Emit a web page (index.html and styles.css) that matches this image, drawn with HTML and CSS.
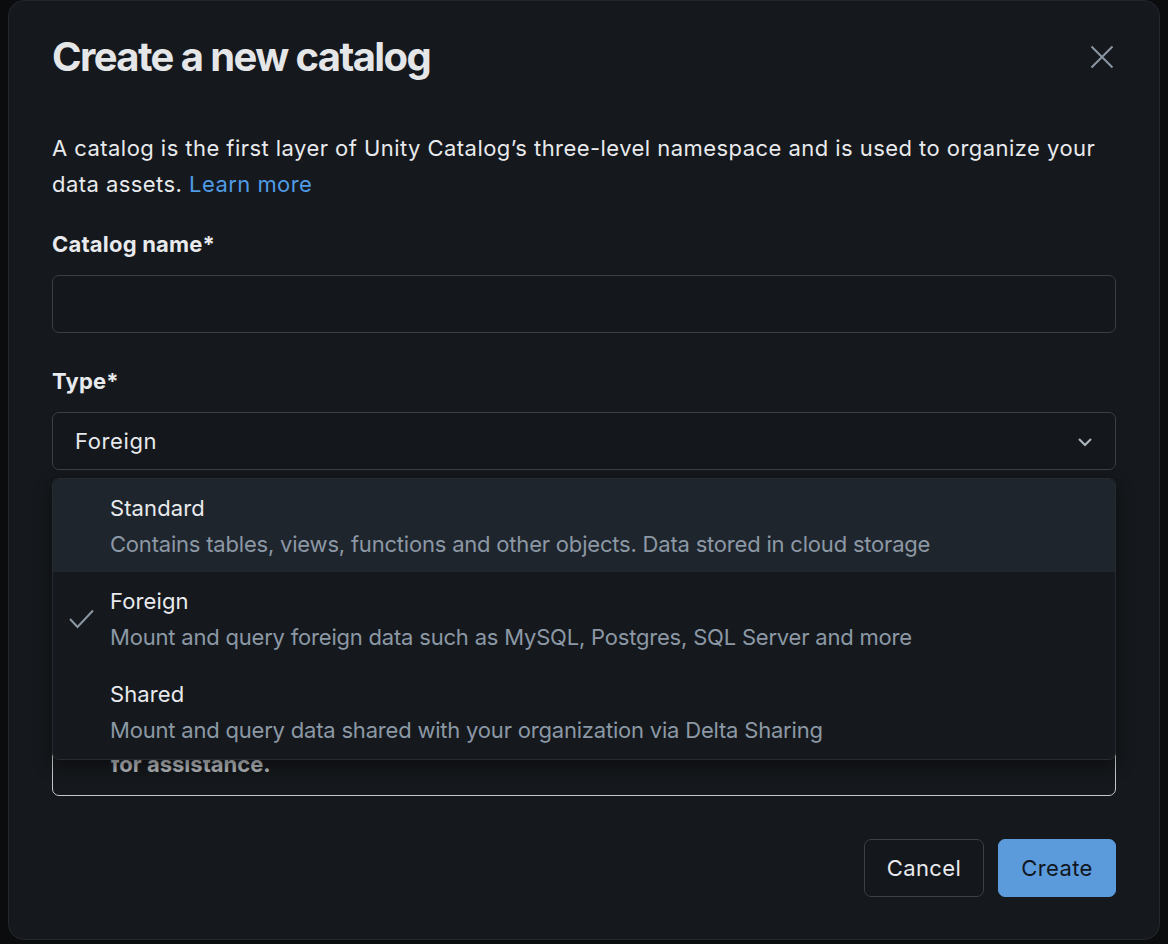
FILE: index.html
```html
<!DOCTYPE html>
<html lang="en">
<head>
<meta charset="utf-8">
<title>Create a new catalog</title>
<link rel="stylesheet" href="styles.css">
</head>
<body>
<div class="modal">
  <div class="modal-header">
    <h1 class="title">Create a new catalog</h1>
    <button class="close" aria-label="Close">
      <svg width="24" height="24" viewBox="0 0 24 24"><path d="M1.5 1.5 L22.5 22.5 M22.5 1.5 L1.5 22.5" stroke="#8b97a3" stroke-width="2" fill="none"/></svg>
    </button>
  </div>
  <p class="intro">A catalog is the first layer of Unity Catalog’s three-level namespace and is used to organize your data assets. <a class="link" href="#">Learn more</a></p>

  <div class="field">
    <label class="label">Catalog name*</label>
    <div class="input"></div>
  </div>

  <div class="field select-field">
    <label class="label">Type*</label>
    <div class="input select">
      <span>Foreign</span>
      <svg class="chevron" width="16" height="10" viewBox="0 0 16 10"><path d="M2 2 L8 8 L14 2" stroke="#a9b4be" stroke-width="2.2" fill="none"/></svg>
    </div>
    <div class="dropdown">
      <div class="option active">
        <span class="check"></span>
        <div class="opt-text">
          <div class="opt-title">Standard</div>
          <div class="opt-desc">Contains tables, views, functions and other objects. Data stored in cloud storage</div>
        </div>
      </div>
      <div class="option">
        <span class="check"><svg width="25" height="20" viewBox="0 0 25 20"><path d="M1 10 L8.5 18 L24 1.5" stroke="#8b97a3" stroke-width="2" fill="none"/></svg></span>
        <div class="opt-text">
          <div class="opt-title">Foreign</div>
          <div class="opt-desc">Mount and query foreign data such as MySQL, Postgres, SQL Server and more</div>
        </div>
      </div>
      <div class="option">
        <span class="check"></span>
        <div class="opt-text">
          <div class="opt-title">Shared</div>
          <div class="opt-desc">Mount and query data shared with your organization via Delta Sharing</div>
        </div>
      </div>
    </div>
  </div>

  <div class="alert">
    <div class="alert-text">You do not have permission to create a connection.<br>Please contact your workspace administrator<br>for assistance.</div>
  </div>

  <div class="footer">
    <button class="btn btn-secondary">Cancel</button>
    <button class="btn btn-primary">Create</button>
  </div>
</div>
</body>
</html>
```

FILE: styles.css
```css
* { box-sizing: border-box; }
html, body {
  margin: 0;
  padding: 0;
  background: #0b0c0e;
  font-family: Inter, "Noto Sans", "Liberation Sans", sans-serif;
  color: #e6e9ec;
}
.modal {
  margin-left: 8px;
  width: 1152px;
  height: 940px;
  background: #15181c;
  border: 1px solid #24282d;
  border-radius: 16px;
  padding: 32px 43px 0 43px;
  display: flex;
  flex-direction: column;
}
.modal-header {
  display: flex;
  align-items: center;
  justify-content: space-between;
  height: 48px;
}
.title {
  margin: 0;
  font-size: 40px;
  line-height: 48px;
  font-weight: 700;
  letter-spacing: -1.6px;
  color: #e4e6e8;
}
.close {
  background: none;
  border: 0;
  padding: 0;
  margin-right: 2px;
  width: 24px;
  height: 24px;
  display: flex;
}
.intro {
  margin: 49px 0 0 0;
  font-size: 22px;
  line-height: 36px;
  letter-spacing: 0.45px;
  color: #e8eaed;
}
.link {
  color: #4f9be6;
  text-decoration: none;
}
.field {
  margin-top: 24px;
  display: flex;
  flex-direction: column;
}
.field + .field { margin-top: 30px; }
.label {
  font-size: 22px;
  line-height: 36px;
  font-weight: 700;
  letter-spacing: 0.2px;
  color: #e8eaed;
  margin-bottom: 13px;
}
.input {
  height: 58px;
  border: 1px solid #3a4047;
  border-radius: 7px;
  background: #14171b;
}
.select {
  display: flex;
  align-items: center;
  justify-content: space-between;
  padding: 0 22px 0 22px;
  font-size: 22px;
  letter-spacing: 0.6px;
  color: #e6e9ec;
}
.chevron { margin-top: 1px; }
.select-field { position: relative; }
.dropdown {
  position: absolute;
  left: 0;
  right: 0;
  top: calc(100% + 8px);
  padding-bottom: 1px;
  background: #15191d;
  border: 1px solid #262b31;
  border-radius: 7px;
  box-shadow: 0 6px 18px rgba(0, 0, 0, 0.45);
  overflow: hidden;
  z-index: 5;
}
.option {
  display: flex;
  align-items: center;
  padding: 11px 0 10px 0;
}
.option.active { background: #1f252c; }
.check {
  width: 57px;
  padding-left: 16px;
  display: flex;
  align-items: center;
}
.opt-title {
  font-size: 22px;
  line-height: 36px;
  letter-spacing: 0.1px;
  color: #e8eaed;
}
.opt-desc {
  font-size: 22px;
  line-height: 36px;
  letter-spacing: -0.2px;
  color: #8c98a5;
}
.alert {
  margin-top: 30px;
  height: 296px;
  border: 1px solid #c3c7cc;
  border-radius: 7px;
  padding: 0 20px 13px 58px;
  display: flex;
  align-items: flex-end;
}
.alert-text {
  font-size: 22px;
  line-height: 36px;
  font-weight: 700;
  color: #b5b9bd;
}
.footer {
  margin-top: 43px;
  display: flex;
  justify-content: flex-end;
  gap: 14px;
}
.btn {
  height: 58px;
  padding: 0 20px;
  border-radius: 7px;
  font-family: Inter, "Noto Sans", "Liberation Sans", sans-serif;
  font-size: 22px;
  font-weight: 400;
  letter-spacing: 0.4px;
}
.btn-secondary {
  width: 120px;
  background: #14171b;
  border: 1px solid #3a4047;
  color: #e8eaed;
}
.btn-primary {
  width: 118px;
  background: #5b9bdc;
  border: 1px solid #5b9bdc;
  color: #11161c;
}
```
